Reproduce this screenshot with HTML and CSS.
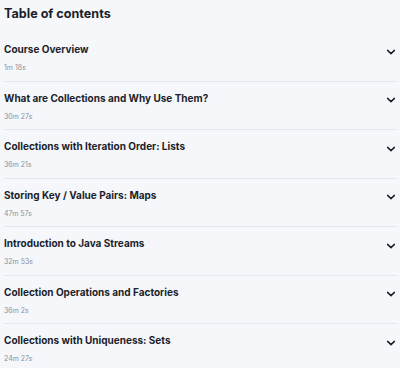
FILE: index.html
```html
<!DOCTYPE html>
<html lang="en">
<head>
<meta charset="utf-8">
<link rel="stylesheet" href="styles.css">
</head>
<body>
<div class="toc">
  <h2 class="toc-title">Table of contents</h2>
  <ul class="toc-list">
    <li class="toc-row"><div class="toc-text"><div class="toc-name">Course Overview</div><div class="toc-time">1m 18s</div></div><svg class="chev" viewBox="0 0 12 12"><path d="M2.6 4.4 6 7.6 9.4 4.4"/></svg></li>
    <li class="toc-row"><div class="toc-text"><div class="toc-name">What are Collections and Why Use Them?</div><div class="toc-time">30m 27s</div></div><svg class="chev" viewBox="0 0 12 12"><path d="M2.6 4.4 6 7.6 9.4 4.4"/></svg></li>
    <li class="toc-row"><div class="toc-text"><div class="toc-name">Collections with Iteration Order: Lists</div><div class="toc-time">36m 21s</div></div><svg class="chev" viewBox="0 0 12 12"><path d="M2.6 4.4 6 7.6 9.4 4.4"/></svg></li>
    <li class="toc-row"><div class="toc-text"><div class="toc-name">Storing Key / Value Pairs: Maps</div><div class="toc-time">47m 57s</div></div><svg class="chev" viewBox="0 0 12 12"><path d="M2.6 4.4 6 7.6 9.4 4.4"/></svg></li>
    <li class="toc-row"><div class="toc-text"><div class="toc-name">Introduction to Java Streams</div><div class="toc-time">32m 53s</div></div><svg class="chev" viewBox="0 0 12 12"><path d="M2.6 4.4 6 7.6 9.4 4.4"/></svg></li>
    <li class="toc-row"><div class="toc-text"><div class="toc-name">Collection Operations and Factories</div><div class="toc-time">36m 2s</div></div><svg class="chev" viewBox="0 0 12 12"><path d="M2.6 4.4 6 7.6 9.4 4.4"/></svg></li>
    <li class="toc-row"><div class="toc-text"><div class="toc-name">Collections with Uniqueness: Sets</div><div class="toc-time">24m 27s</div></div><svg class="chev" viewBox="0 0 12 12"><path d="M2.6 4.4 6 7.6 9.4 4.4"/></svg></li>
  </ul>
</div>
</body>
</html>
```
FILE: styles.css
```css
html, body {
  margin: 0;
  padding: 0;
  background: #f5f7fa;
}
body {
  font-family: Inter, "Noto Sans", sans-serif;
  color: #1b1e2b;
}
.toc {
  padding: 6px 3px 0 4px;
}
.toc-title {
  margin: 0 0 11px 0;
  font-size: 12.6px;
  line-height: 16px;
  font-weight: 700;
}
.toc-list {
  list-style: none;
  margin: 0;
  padding: 0;
}
.toc-row {
  display: flex;
  align-items: flex-start;
  justify-content: space-between;
  padding: 10px 0 7.5px 0;
  border-bottom: 1px solid #e3e7ed;
}
.toc-text {
  display: flex;
  flex-direction: column;
  gap: 8px;
}
.toc-name {
  font-size: 10px;
  line-height: 12px;
  font-weight: 700;
}
.toc-time {
  font-size: 7px;
  line-height: 10px;
  color: #8a8f9c;
}
.chev {
  width: 12px;
  height: 12px;
  margin-top: 2.5px;
  fill: none;
  stroke: #1b1e2b;
  stroke-width: 1.5;
  stroke-linecap: round;
  stroke-linejoin: round;
}
```
